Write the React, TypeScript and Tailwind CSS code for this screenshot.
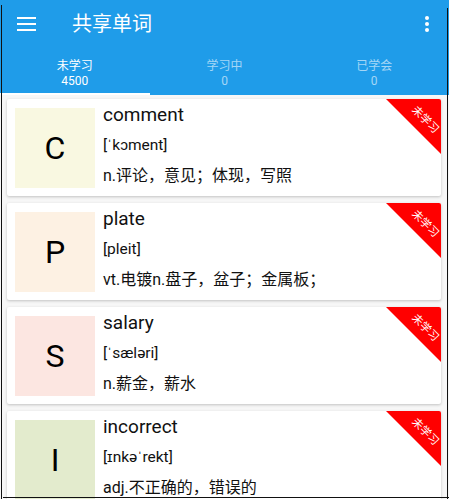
import { useState } from 'react';

const words = [
  { letter: 'C', word: 'comment', phonetic: "[ˈkɔment]", meaning: 'n.评论，意见；体现，写照', box: 'bg-[#f9f8e1]' },
  { letter: 'P', word: 'plate', phonetic: '[pleit]', meaning: 'vt.电镀n.盘子，盆子；金属板；', box: 'bg-[#fdf1e3]' },
  { letter: 'S', word: 'salary', phonetic: "[ˈsæləri]", meaning: 'n.薪金，薪水', box: 'bg-[#fce6e1]' },
  { letter: 'I', word: 'incorrect', phonetic: "[ɪnkəˈrekt]", meaning: 'adj.不正确的，错误的', box: 'bg-[#e3ebcd]' },
];

const tabs = [
  { label: '未学习', count: 4500 },
  { label: '学习中', count: 0 },
  { label: '已学会', count: 0 },
];

function WordCard({ item }: { item: (typeof words)[number] }) {
  return (
    <div className="relative flex h-[97px] gap-2 overflow-hidden rounded-[2px] bg-white pl-2 pt-[9px] shadow-[0_1px_3px_rgba(0,0,0,0.22)]">
      <div className={`flex h-20 w-20 shrink-0 items-center justify-center text-[32px] text-black ${item.box}`}>
        {item.letter}
      </div>
      <div className="flex flex-col text-[#111]">
        <div className="-mt-[8px] h-[30px] text-[19px] leading-[30px]">{item.word}</div>
        <div className="h-[31px] text-[15.5px] leading-[31px]">{item.phonetic}</div>
        <div className="h-[30px] text-[16px] leading-[30px]">{item.meaning}</div>
      </div>
      <div className="absolute right-0 top-0 h-[55px] w-[55px]">
        <div className="h-full w-full bg-[#ff0000] [clip-path:polygon(0_0,100%_0,100%_100%)]" />
        <div className="absolute left-[9px] top-[14px] w-[60px] rotate-45 text-center text-[11px] leading-[14px] text-white">
          未学习
        </div>
      </div>
    </div>
  );
}

export default function App() {
  const [active, setActive] = useState(0);

  return (
    <div className="relative h-[499px] w-[449px] overflow-hidden bg-[#f7f7f7] font-['Roboto','Noto_Sans_CJK_SC',sans-serif]">
      <div className="bg-[#1f9ce9] text-white">
        <div className="flex h-12 items-center">
          <button className="ml-[17px] flex w-[19px] flex-col gap-[4px]">
            <span className="h-[2px] w-full bg-white" />
            <span className="h-[2px] w-full bg-white" />
            <span className="h-[2px] w-full bg-white" />
          </button>
          <h1 className="ml-[36px] text-[20px] leading-none">共享单词</h1>
          <button className="ml-auto mr-[20px] flex flex-col items-center gap-[2px]">
            <span className="h-[4px] w-[4px] rounded-full bg-white" />
            <span className="h-[4px] w-[4px] rounded-full bg-white" />
            <span className="h-[4px] w-[4px] rounded-full bg-white" />
          </button>
        </div>
        <div className="flex h-[47px]">
          {tabs.map((t, i) => (
            <button
              key={t.label}
              onClick={() => setActive(i)}
              className={`flex flex-1 flex-col items-center justify-end border-b-2 pb-[4px] text-[12px] leading-[15px] ${
                active === i ? 'border-white text-white' : 'border-transparent text-white/60'
              }`}
            >
              <span>{t.label}</span>
              <span>{t.count}</span>
            </button>
          ))}
        </div>
      </div>

      <div className="flex flex-col gap-[7px] pl-[7px] pr-[8px] pt-[4px]">
        {words.map((w) => (
          <WordCard key={w.word} item={w} />
        ))}
      </div>

      <div className="absolute bottom-0 left-[1px] top-[5px] w-px bg-[#111]" />
      <div className="absolute bottom-0 left-[447px] top-[8px] w-px bg-[#111]" />
      <div className="absolute left-[3px] right-0 top-[497px] h-px bg-[#111]" />
    </div>
  );
}
